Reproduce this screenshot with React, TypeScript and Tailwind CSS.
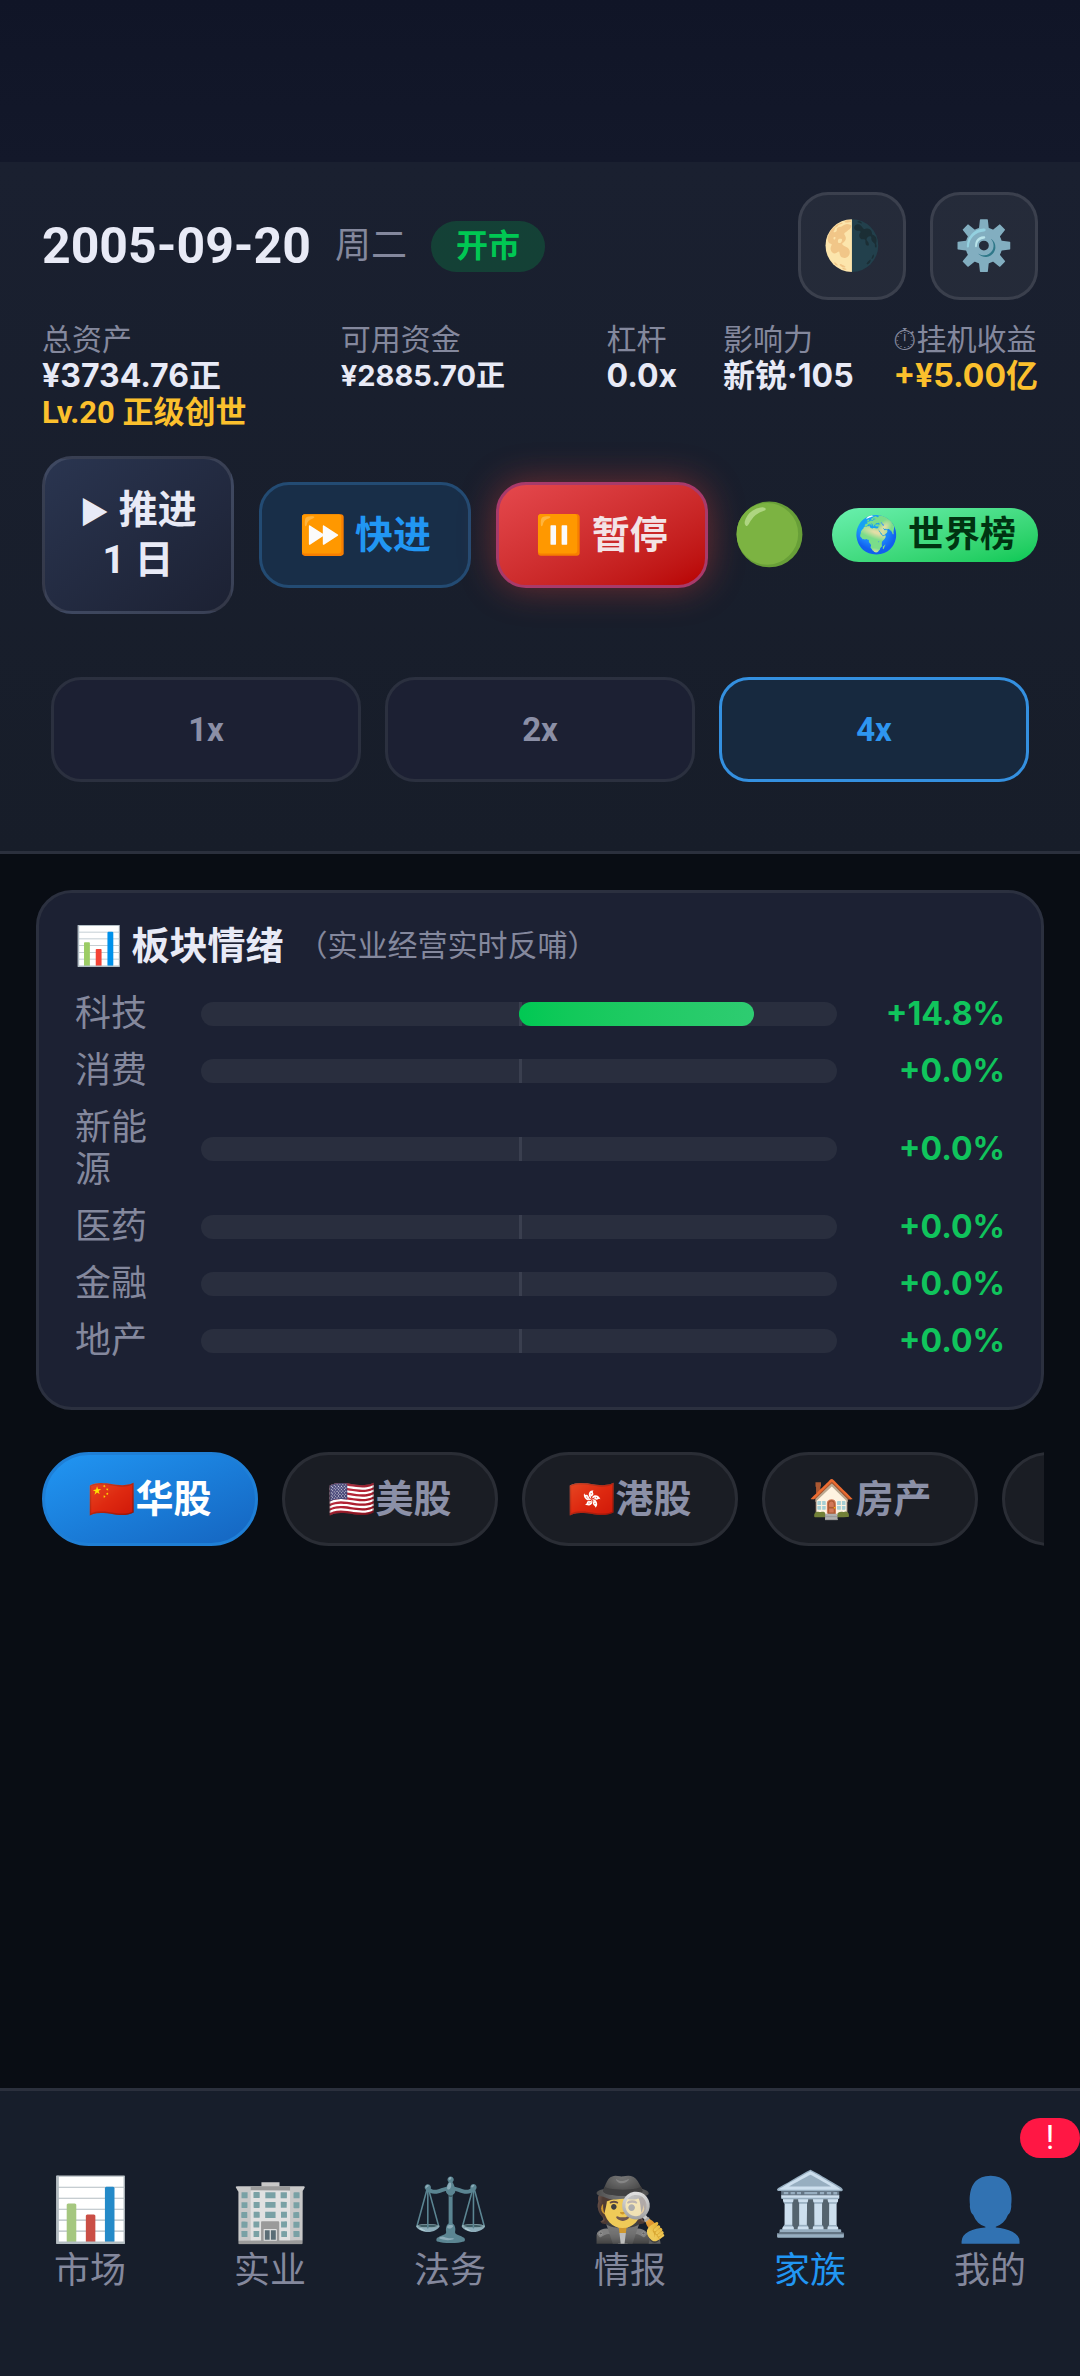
import { useState } from "react";

const sectors = [
  { name: "科技", value: 14.8 },
  { name: "消费", value: 0 },
  { name: "新能源", value: 0 },
  { name: "医药", value: 0 },
  { name: "金融", value: 0 },
  { name: "地产", value: 0 },
];

const markets = [
  { icon: "🇨🇳", name: "华股" },
  { icon: "🇺🇸", name: "美股" },
  { icon: "🇭🇰", name: "港股" },
  { icon: "🏠", name: "房产" },
  { icon: "", name: "" },
];

const navItems = [
  { icon: "📊", name: "市场" },
  { icon: "🏢", name: "实业" },
  { icon: "⚖️", name: "法务" },
  { icon: "🕵️", name: "情报" },
  { icon: "🏛️", name: "家族" },
  { icon: "👤", name: "我的", badge: "!" },
];

const Stat = ({
  label,
  value,
  valueClass,
  extra,
}: {
  label: string;
  value: string;
  valueClass: string;
  extra?: string;
}) => (
  <div className="whitespace-nowrap">
    <div className="text-[30px] leading-[36px] text-[#84889d]">{label}</div>
    <div
      className={`font-[Inter,'Noto_Sans_CJK_SC',sans-serif] font-bold leading-[36px] ${valueClass}`}
    >
      {value}
    </div>
    {extra && (
      <div className="text-[31px] leading-[38px] font-bold text-[#fbc02d]">{extra}</div>
    )}
  </div>
);

const App = () => {
  const [speed, setSpeed] = useState("4x");
  const [market, setMarket] = useState("华股");
  const [tab, setTab] = useState("家族");

  return (
    <div className="flex min-h-screen flex-col overflow-hidden bg-[#090d14] font-[Roboto,'Noto_Sans_CJK_SC',sans-serif] text-[#e8eaf6]">
      <div className="h-[162px] bg-linear-to-b from-[#101527] to-[#13182a]" />
      <header className="border-b-[3px] border-[#2b303d] bg-linear-to-b from-[#1a2030] to-[#171d29] px-[42px] pt-[30px] pb-[69px]">
        <div className="flex items-center justify-between">
          <div className="flex items-center gap-6">
            <span className="text-[50px] leading-none font-bold">2005-09-20</span>
            <span className="text-[36px] leading-none text-[#84889d]">周二</span>
            <span className="rounded-full bg-[#00c853]/20 px-[25px] text-[32px] leading-[51px] font-bold text-[#00c853]">
              开市
            </span>
          </div>
          <div className="flex gap-6">
            {["🌗", "⚙️"].map((icon) => (
              <button
                key={icon}
                className="h-[108px] w-[108px] rounded-[30px] border-[3px] border-white/10 bg-white/5 text-[48px] leading-none"
              >
                {icon}
              </button>
            ))}
          </div>
        </div>

        <div className="mt-[22px] grid grid-cols-[300fr_267fr_117fr_171fr_141fr]">
          <Stat
            label="总资产"
            value="¥3734.76正"
            valueClass="text-[32px]"
            extra="Lv.20 正级创世"
          />
          <Stat label="可用资金" value="¥2885.70正" valueClass="text-[29px]" />
          <Stat label="杠杆" value="0.0x" valueClass="text-[32px]" />
          <Stat label="影响力" value="新锐·105" valueClass="text-[32px]" />
          <Stat
            label="⏱挂机收益"
            value="+¥5.00亿"
            valueClass="text-[32px] text-[#fbc02d]"
          />
        </div>

        <div className="mt-6 flex items-center justify-between">
          <button className="w-[192px] rounded-[30px] border-[3px] border-white/10 bg-linear-to-br from-[#2a3550] to-[#1c2133] py-[26px] text-[39px] leading-[50px] font-bold whitespace-nowrap">
            <span className="text-[30px] leading-none">▶</span> 推进
            <br />1 日
          </button>
          <button className="h-[106px] w-[212px] rounded-[30px] border-[3px] border-[#234b73] bg-[#182e48] text-[38px] font-bold text-[#2196f3]">
            ⏩ 快进
          </button>
          <button className="h-[106px] w-[212px] rounded-[30px] border-[3px] border-[#a83a6a] bg-linear-to-br from-[#e5484d] to-[#b80000] text-[38px] font-bold text-[#f3e3e6] shadow-[0_0_36px_rgba(244,67,54,0.4)]">
            ⏸️ 暂停
          </button>
          <span className="text-[60px] leading-none">🟢</span>
          <button className="rounded-full bg-linear-to-br from-[#69f0ae] to-[#00c853] px-[22px] text-[36px] leading-[54px] font-bold text-[#003311]">
            🌍 世界榜
          </button>
        </div>

        <div className="mt-[63px] grid grid-cols-3 gap-6 px-[9px]">
          {["1x", "2x", "4x"].map((item) => (
            <button
              key={item}
              onClick={() => setSpeed(item)}
              className={`h-[105px] rounded-[30px] border-[3px] text-[33px] font-bold ${
                speed === item
                  ? "border-[#3490e0] bg-[#17293f] text-[#2e96f0]"
                  : "border-[#2b303f] bg-[#1c2033] text-[#8b8fa6]"
              }`}
            >
              {item}
            </button>
          ))}
        </div>
      </header>

      <main className="px-9 pt-9">
        <section className="rounded-[36px] border-[3px] border-[#2b303f] bg-[#1c2133] px-9 pt-[30px] pb-[45px]">
          <h2 className="mb-6 flex items-center leading-[46px]">
            <span className="text-[38px] font-bold">📊 板块情绪</span>
            <span className="ml-[14px] text-[30px] text-[#84889d]">
              （实业经营实时反哺）
            </span>
          </h2>
          <div className="flex flex-col gap-[15px]">
            {sectors.map((sector) => (
              <div key={sector.name} className="flex items-center gap-6">
                <span className="w-[102px] text-[36px] leading-[42px] text-[#84889d]">
                  {sector.name}
                </span>
                <div className="relative h-6 flex-1 overflow-hidden rounded-full bg-[#292e3e]">
                  <div className="absolute inset-y-0 left-1/2 w-[3px] bg-[#3a3f4f]" />
                  <div
                    className="absolute inset-y-0 left-1/2 rounded-full bg-linear-to-r from-[#00c853] to-[#2ecc71]"
                    style={{ width: `${sector.value * 2.5}%` }}
                  />
                </div>
                <span className="w-36 text-right font-[Inter,'Noto_Sans_CJK_SC',sans-serif] text-[32px] leading-[42px] font-bold text-[#10c45c]">
                  +{sector.value.toFixed(1)}%
                </span>
              </div>
            ))}
          </div>
        </section>

        <div className="mt-[42px] flex gap-6 overflow-hidden pl-1.5">
          {markets.map((item) => (
            <button
              key={item.name}
              onClick={() => setMarket(item.name)}
              className={`h-[94px] w-[216px] shrink-0 rounded-full border-[3px] text-[38px] font-bold whitespace-nowrap ${
                market === item.name
                  ? "border-[#1f7fd6] bg-linear-to-br from-[#2196f3] to-[#1565c0] text-white"
                  : "border-[#2a2d35] bg-[#1a1d24] text-[#8b90a7]"
              }`}
            >
              {item.icon}
              {item.name}
            </button>
          ))}
        </div>
      </main>

      <nav className="mt-auto grid h-[288px] grid-cols-6 border-t-[3px] border-[#2b303d] bg-[#171e2b]">
        {navItems.map((item) => (
          <button
            key={item.name}
            onClick={() => setTab(item.name)}
            className={`relative flex flex-col items-center pt-[82px] ${
              tab === item.name ? "text-[#2196f3]" : "text-[#84889d]"
            }`}
          >
            <span
              className={`text-[62px] leading-[74px] ${
                tab === item.name ? "-translate-y-1.5" : "grayscale-30"
              }`}
            >
              {item.icon}
            </span>
            <span className="text-[36px] leading-[48px]">{item.name}</span>
            {item.badge && (
              <span className="absolute top-[27px] right-0 w-[60px] rounded-full bg-[#ff1744] text-center text-[33px] leading-[40px] text-white">
                {item.badge}
              </span>
            )}
          </button>
        ))}
      </nav>
    </div>
  );
};

export default App;
